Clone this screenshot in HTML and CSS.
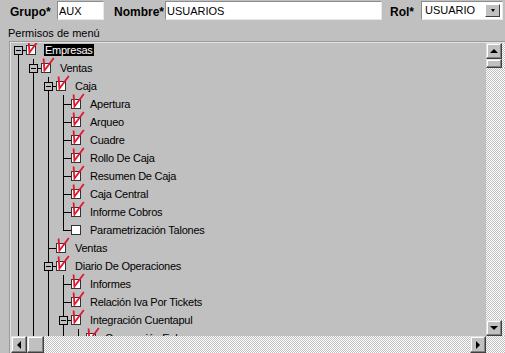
FILE: index.html
```html
<!DOCTYPE html>
<html>
<head>
    <title>Usuarios - Permisos</title>
    <link rel="stylesheet" href="styles.css">
</head>
<body>
    <svg class="defs" width="0" height="0">
        <symbol id="chk" viewBox="0 0 14 16">
            <rect x="0.5" y="6.5" width="9" height="9" fill="#fff" stroke="#333"/>
            <path d="M2.6 1.5 L3.4 13.6 L12.8 1" fill="none" stroke="#e4152e" stroke-width="1.8"/>
        </symbol>
        <symbol id="unchk" viewBox="0 0 14 16">
            <rect x="0.5" y="6.5" width="9" height="9" fill="#fff" stroke="#333"/>
        </symbol>
    </svg>

    <div class="topbar">
        <label class="lbl lbl-grupo">Grupo*</label>
        <input class="field field-grupo" value="AUX">
        <label class="lbl lbl-nombre">Nombre*</label>
        <input class="field field-nombre" value="USUARIOS">
        <label class="lbl lbl-rol">Rol*</label>
        <div class="combo">
            <span class="combo-text">USUARIO</span>
            <span class="combo-btn"><i class="arrow-down"></i></span>
        </div>
    </div>

    <div class="caption">Permisos de menú</div>

    <div class="panel">
        <div class="tree">
            <div class="tree-list">
                <div class="row"><i class="g b"><b class="box"></b></i><svg class="chk"><use href="#chk"/></svg><span class="txt sel">Empresas</span></div>
                <div class="row"><i class="g v"></i><i class="g t"><b class="box"></b></i><svg class="chk"><use href="#chk"/></svg><span class="txt">Ventas</span></div>
                <div class="row"><i class="g v"></i><i class="g v"></i><i class="g t"><b class="box"></b></i><svg class="chk"><use href="#chk"/></svg><span class="txt">Caja</span></div>
                <div class="row"><i class="g v"></i><i class="g v"></i><i class="g v"></i><i class="g t"></i><svg class="chk"><use href="#chk"/></svg><span class="txt">Apertura</span></div>
                <div class="row"><i class="g v"></i><i class="g v"></i><i class="g v"></i><i class="g t"></i><svg class="chk"><use href="#chk"/></svg><span class="txt">Arqueo</span></div>
                <div class="row"><i class="g v"></i><i class="g v"></i><i class="g v"></i><i class="g t"></i><svg class="chk"><use href="#chk"/></svg><span class="txt">Cuadre</span></div>
                <div class="row"><i class="g v"></i><i class="g v"></i><i class="g v"></i><i class="g t"></i><svg class="chk"><use href="#chk"/></svg><span class="txt">Rollo De Caja</span></div>
                <div class="row"><i class="g v"></i><i class="g v"></i><i class="g v"></i><i class="g t"></i><svg class="chk"><use href="#chk"/></svg><span class="txt">Resumen De Caja</span></div>
                <div class="row"><i class="g v"></i><i class="g v"></i><i class="g v"></i><i class="g t"></i><svg class="chk"><use href="#chk"/></svg><span class="txt">Caja Central</span></div>
                <div class="row"><i class="g v"></i><i class="g v"></i><i class="g v"></i><i class="g t"></i><svg class="chk"><use href="#chk"/></svg><span class="txt">Informe Cobros</span></div>
                <div class="row"><i class="g v"></i><i class="g v"></i><i class="g v"></i><i class="g l"></i><svg class="chk"><use href="#unchk"/></svg><span class="txt">Parametrización Talones</span></div>
                <div class="row"><i class="g v"></i><i class="g v"></i><i class="g t"></i><svg class="chk"><use href="#chk"/></svg><span class="txt">Ventas</span></div>
                <div class="row"><i class="g v"></i><i class="g v"></i><i class="g t"><b class="box"></b></i><svg class="chk"><use href="#chk"/></svg><span class="txt">Diario De Operaciones</span></div>
                <div class="row"><i class="g v"></i><i class="g v"></i><i class="g v"></i><i class="g t"></i><svg class="chk"><use href="#chk"/></svg><span class="txt">Informes</span></div>
                <div class="row"><i class="g v"></i><i class="g v"></i><i class="g v"></i><i class="g t"></i><svg class="chk"><use href="#chk"/></svg><span class="txt">Relación Iva Por Tickets</span></div>
                <div class="row"><i class="g v"></i><i class="g v"></i><i class="g v"></i><i class="g t"><b class="box"></b></i><svg class="chk"><use href="#chk"/></svg><span class="txt">Integración Cuentapul</span></div>
                <div class="row"><i class="g v"></i><i class="g v"></i><i class="g v"></i><i class="g v"></i><i class="g t"></i><svg class="chk"><use href="#chk"/></svg><span class="txt">Generación Enlace</span></div>
            </div>
        </div>

        <div class="vscroll">
            <span class="sbtn sbtn-v"><i class="arrow-up"></i></span>
            <span class="thumb thumb-v"></span>
            <span class="track"></span>
            <span class="sbtn sbtn-v"><i class="arrow-down"></i></span>
        </div>

        <div class="hscroll">
            <span class="sbtn sbtn-h"><i class="arrow-left"></i></span>
            <span class="thumb thumb-h"></span>
            <span class="track"></span>
            <span class="sbtn sbtn-h"><i class="arrow-right"></i></span>
        </div>

        <div class="corner"></div>
    </div>
</body>
</html>
```

FILE: styles.css
```css
html, body {
    margin: 0;
    height: 353px;
    overflow: hidden;
}
body {
    background: #c0c0c0;
    font-family: "Liberation Sans", Arial, sans-serif;
    color: #000;
}
.defs {
    position: absolute;
    width: 0;
    height: 0;
}

/* top form row */
.topbar {
    display: flex;
    align-items: flex-start;
    height: 21px;
    padding-left: 10px;
}
.lbl {
    font-weight: bold;
    font-size: 12px;
    line-height: 14px;
    margin-top: 5px;
    white-space: nowrap;
}
.lbl-grupo { width: 47px; }
.lbl-nombre { width: 51px; margin-left: 10px; }
.lbl-rol { width: 31px; margin-left: 8px; }
.field, .combo {
    box-sizing: border-box;
    height: 19px;
    margin-top: 1px;
    background: #fff;
    border: 1px solid;
    border-color: #8c8c8c #e8e8e8 #e8e8e8 #8c8c8c;
    font-family: "Liberation Sans", Arial, sans-serif;
    font-size: 11px;
    line-height: 17px;
    padding: 0 1px;
    color: #000;
}
.field-grupo { width: 47px; }
.field-nombre { width: 217px; }
.combo {
    width: 82px;
    display: flex;
    align-items: flex-start;
    padding: 0 0 0 3px;
}
.combo-text { flex: 1; }
.combo-btn {
    box-sizing: border-box;
    width: 15px;
    height: 13px;
    margin: 2px 2px 0 0;
    background: #c0c0c0;
    border: 1px solid;
    border-color: #fff #404040 #404040 #fff;
    display: flex;
    align-items: center;
    justify-content: center;
}

/* arrows */
.arrow-down, .arrow-up, .arrow-left, .arrow-right {
    width: 0;
    height: 0;
    border-style: solid;
    border-color: transparent;
}
.arrow-down { border-width: 3px 3px 0 3px; border-top-color: #000; }
.combo-btn .arrow-down { border-width: 3px 2.5px 0 2.5px; }
.arrow-up { border-width: 0 4px 4px 4px; border-bottom-color: #000; }
.sbtn-v .arrow-down { border-width: 4px 4px 0 4px; }
.arrow-left { border-width: 4px 4px 4px 0; border-right-color: #000; }
.arrow-right { border-width: 4px 0 4px 4px; border-left-color: #000; }

.caption {
    box-sizing: border-box;
    height: 20px;
    padding: 6px 0 0 8px;
    font-size: 11px;
    line-height: 12px;
}

/* tree panel */
.panel {
    box-sizing: border-box;
    height: 312px;
    margin-left: 9px;
    border-top: 1px solid #9a9a9a;
    border-left: 1px solid #9a9a9a;
    box-shadow: inset 1px 1px 0 #e2e2e2;
    padding: 1px 0 0 1px;
    display: grid;
    grid-template-columns: 1fr 19px;
    grid-template-rows: 1fr 17px;
}
.tree {
    overflow: hidden;
    font-size: 11px;
    letter-spacing: -0.25px;
}
.tree-list {
    margin-top: -2px;
}
.row {
    display: flex;
    align-items: center;
    height: 18px;
}
.g {
    position: relative;
    flex: none;
    width: 15px;
    height: 18px;
}
.v::before, .t::before, .l::before, .b::before {
    content: "";
    position: absolute;
    left: 7px;
    width: 1px;
    background: #000;
}
.v::before, .t::before { top: 0; bottom: 0; }
.l::before { top: 0; height: 9px; }
.b::before { top: 9px; bottom: 0; }
.t::after, .l::after, .b::after {
    content: "";
    position: absolute;
    left: 7px;
    right: 0;
    top: 9px;
    height: 1px;
    background: #000;
}
.box {
    position: absolute;
    z-index: 1;
    left: 3px;
    top: 5px;
    box-sizing: border-box;
    width: 9px;
    height: 9px;
    border: 1px solid #000;
    background: #c0c0c0;
}
.box::after {
    content: "";
    position: absolute;
    left: 1px;
    top: 3px;
    width: 5px;
    height: 1px;
    background: #000;
}
.chk {
    flex: none;
    align-self: flex-start;
    width: 14px;
    height: 16px;
    margin-top: -2px;
}
.txt {
    margin-left: 4px;
    padding: 0 1px;
    line-height: 12px;
    white-space: nowrap;
}
.txt.sel {
    background: #000;
    color: #fff;
}

/* scrollbars */
.vscroll, .hscroll, .corner, .track {
    background: repeating-conic-gradient(#fff 0 25%, #c0c0c0 0 50%) 0 0 / 2px 2px;
}
.vscroll {
    display: flex;
    flex-direction: column;
}
.hscroll {
    display: flex;
}
.track { flex: 1; }
.sbtn, .thumb {
    box-sizing: border-box;
    flex: none;
    background: #c0c0c0;
    border: 1px solid;
    border-color: #e0e0e0 #404040 #404040 #e0e0e0;
    box-shadow: inset -1px -1px 0 #808080, inset 1px 1px 0 #fff;
    display: flex;
    align-items: center;
    justify-content: center;
}
.sbtn-v { width: 16px; height: 16px; }
.thumb-v { width: 16px; height: 9px; }
.sbtn-h { width: 16px; height: 17px; }
.thumb-h { width: 17px; height: 17px; }
```
